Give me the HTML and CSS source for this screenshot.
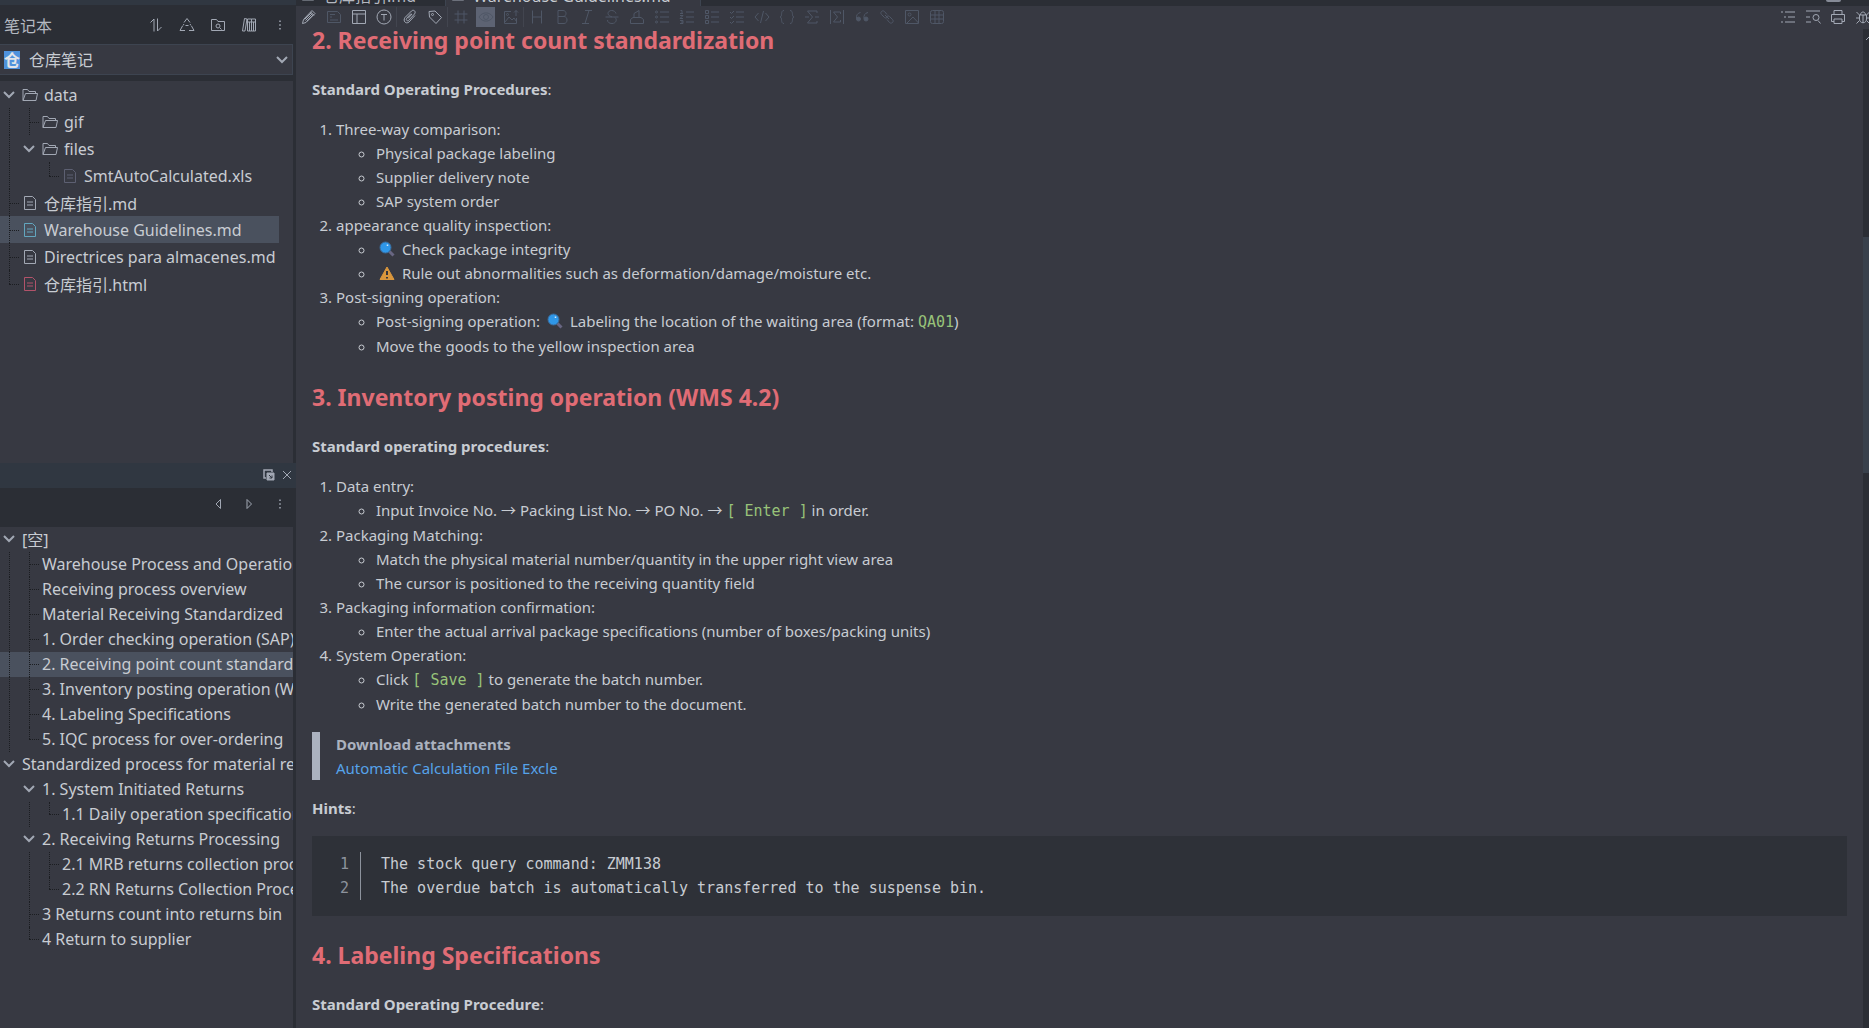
FILE: index.html
```
<!DOCTYPE html>
<html lang="zh-CN">
<head>
<meta charset="utf-8">
<title>Warehouse Guidelines.md</title>
<link rel="stylesheet" href="styles.css">
</head>
<body>
<svg class="sprite" aria-hidden="true">
  <symbol id="chev" viewBox="0 0 12 8"><path d="M1 1l5 5 5-5"/></symbol>
  <symbol id="folder" viewBox="0 0 16 16"><path d="M1 13.500V2.500h4.500l1.500 2h6.500v2M1 13.500l2.500-7h12l-1.500 7z"/></symbol>
  <symbol id="file" viewBox="0 0 16 16"><path d="M2.500 1.500h8l3 3v10h-11zM5 7h6M5 10h6"/></symbol>
  <symbol id="sort" viewBox="0 0 16 16"><path d="M2.500 5.500L6 2v12.500M9.500 1.500V14l4-4"/></symbol>
  <symbol id="recycle" viewBox="0 0 16 16"><path d="M5 5.500L8 1.500l3 4M3.500 9L1 13.500h5M12.500 9l2.500 4.500h-5M6.500 8.500h3M5 7l-1 1.500M11 7l1 1.500"/></symbol>
  <symbol id="foldersearch" viewBox="0 0 16 16"><path d="M1.500 13.500v-11h5l1.500 2h6.500v9zM10 11l1.500 1.500"/><circle cx="8" cy="9" r="2"/></symbol>
  <symbol id="books" viewBox="0 0 16 16"><path d="M3.500 1.500L1.500 14h2.500L6 2zM6.500 2h4v12h-4zM10.500 2h4v12h-4zM6.500 5h8M8.500 5v9M12.500 5v9"/></symbol>
  <symbol id="dots" viewBox="0 0 16 16"><path d="M7 3h2M7 8h2M7 13h2" stroke-width="2"/></symbol>
  <symbol id="float" viewBox="0 0 12 12"><path d="M3 9H1V1h8v2" stroke-width="1.500"/><path d="M4 4h7v7H4z" class="solid"/><path d="M6 6l3 3M9 6.500V9H6.500" stroke="#303741"/></symbol>
  <symbol id="close" viewBox="0 0 12 12"><path d="M2 2l8 8M10 2l-8 8"/></symbol>
  <symbol id="prev" viewBox="0 0 16 16"><path d="M10.500 3.500v9L6 8z"/></symbol>
  <symbol id="next" viewBox="0 0 16 16"><path d="M6 3.500v9L10.500 8z"/></symbol>
  <symbol id="pencil" viewBox="0 0 16 16"><path d="M1.500 14.500l1-4 8.500-9 3 3-9 9zM3.500 10.500l7-7M5.500 12.500l7-7M9.500 3l3.500 3.500M4.500 11.500l7-7"/></symbol>
  <symbol id="save" viewBox="0 0 16 16"><path d="M1.500 2.500h10l3 3v8h-13zM4 5.500h5M4 8h2M4 11h8"/></symbol>
  <symbol id="layout" viewBox="0 0 16 16"><path d="M1.500 1.500h13v13h-13zM1.500 5h13M6 5v9.500"/></symbol>
  <symbol id="tcircle" viewBox="0 0 16 16"><circle cx="8" cy="8" r="7"/><path d="M5 5.500h6M8 5.500v6"/></symbol>
  <symbol id="clip" viewBox="0 0 16 16"><path d="M9 4.500l-4.500 5c-1 1.500 1 3 2 2l6-6.500c2-2.500-1-5-3-3L3 8.500c-2.500 3.500 1 7 4 4.500l6-6.500M10 5l-4 4.500"/></symbol>
  <symbol id="tag" viewBox="0 0 16 16"><path d="M2 2.500l6-.500 6.500 6.500-5.500 6L2.500 8z"/><circle cx="5.500" cy="5.500" r="1"/></symbol>
  <symbol id="hash" viewBox="0 0 16 16"><path d="M5 1.500v13M11 1.500v13M1.500 5h13M1.500 11h13"/></symbol>
  <symbol id="eye" viewBox="0 0 16 16"><path d="M1 8c3.500-5.500 10.500-5.500 14 0-3.500 5.500-10.500 5.500-14 0z"/><circle cx="8" cy="8" r="2.500"/></symbol>
  <symbol id="imgup" viewBox="0 0 16 16"><path d="M8 2.500H1.500v12h12V9M2 13l4-5 3 3 2-2 2.500 3.500M13 7V1.500M11 3.500l2-2 2 2"/><circle cx="4.500" cy="5.500" r="1"/></symbol>
  <symbol id="h" viewBox="0 0 16 16"><path d="M3.500 1.500v13M12.500 1.500v13M3.500 8h9"/></symbol>
  <symbol id="b" viewBox="0 0 16 16"><path d="M4 1.500h5c4 0 4 6 0 6H4zM4 7.500h6c4 0 4 7 0 7H4z"/></symbol>
  <symbol id="i" viewBox="0 0 16 16"><path d="M6 1.500h7M3 14.500h7M10 1.500l-4 13"/></symbol>
  <symbol id="s" viewBox="0 0 16 16"><path d="M12 4.500c-1-4-8-4-8 0 0 2 2 2.500 4 3.500M1.500 8h13M11 8.500c2.500 2 1 6-3 6-3 0-4.500-1.500-4.500-3.500"/></symbol>
  <symbol id="marker" viewBox="0 0 16 16"><path d="M1.500 14.500v-4l2.500-2h8l2.500 2v4zM5 8.500V4.500l5-3v7"/></symbol>
  <symbol id="ul" viewBox="0 0 16 16"><path d="M6 3h9M6 8h9M6 13h9"/><circle cx="2.500" cy="3" r="1"/><circle cx="2.500" cy="8" r="1"/><circle cx="2.500" cy="13" r="1"/></symbol>
  <symbol id="ol" viewBox="0 0 16 16"><path d="M7 3h8M7 8h8M7 13h8M1.500 1.500h1.500v3M1 4.500h3M1 6.500h3l-3 3h3M1 11.500h3v3H1M2 13h2"/></symbol>
  <symbol id="sq" viewBox="0 0 16 16"><path d="M7 3h8M7 8h8M7 13h8M1.500 1.500h3v3h-3zM1.500 6.500h3v3h-3zM1.500 11.500h3v3h-3z"/></symbol>
  <symbol id="task" viewBox="0 0 16 16"><path d="M7 3h8M7 8h8M7 13h8M1 3l1.500 1.500L5 2M1 8l1.500 1.500L5 7M1 13l1.500 1.500L5 12"/></symbol>
  <symbol id="code" viewBox="0 0 16 16"><path d="M4.500 4L1 8l3.500 4M11.500 4L15 8l-3.500 4M9.500 2l-3 12"/></symbol>
  <symbol id="brace" viewBox="0 0 16 16"><path d="M5 1.500c-4 0-1 6-4 6.500 3 .500 0 6.500 4 6.500M11 1.500c4 0 1 6 4 6.500-3 .500 0 6.500-4 6.500"/></symbol>
  <symbol id="sum" viewBox="0 0 16 16"><path d="M13 4V2H3.500l5 6-5 6H13v-2M1 8h4M11 8h4"/></symbol>
  <symbol id="sumbox" viewBox="0 0 16 16"><path d="M1.500 1v14M14.500 1v14M11.500 5V3h-7l4 5-4 5h7v-2"/></symbol>
  <symbol id="quote" viewBox="0 0 16 16"><path d="M6.500 3.500c-3 .500-4.500 3-4 6M14 3.500c-3 .500-4.500 3-4 6"/><circle cx="4.500" cy="10" r="2" class="solid"/><circle cx="12" cy="10" r="2" class="solid"/></symbol>
  <symbol id="link" viewBox="0 0 16 16"><path d="M8 5.500L5.500 2.500C3.500.500.500 3.500 2.500 5.500l3 3c1 1 2.500.500 3-.500M8 10.500l2.500 3c2 2 5-1 3-3l-3-3c-1-1-2.500-.500-3 .500M6 6l4 4"/></symbol>
  <symbol id="img" viewBox="0 0 16 16"><path d="M1.500 1.500h13v13h-13zM3 14l6-6 5.500 6"/><circle cx="5.500" cy="5.500" r="1.500"/></symbol>
  <symbol id="table" viewBox="0 0 16 16"><rect x="1.500" y="1.500" width="13" height="13" rx="2"/><path d="M1.500 6h13M1.500 10h13M6 1.500v13M10 1.500v13"/></symbol>
  <symbol id="outline" viewBox="0 0 16 16"><path d="M1 3h2M5 3h10M4 8h2M8 8h7M1 13h2M5 13h10"/></symbol>
  <symbol id="find" viewBox="0 0 16 16"><path d="M1 2h14M1 8h4M1 13h5M13 11.500l2.500 3"/><circle cx="11" cy="8.500" r="3"/></symbol>
  <symbol id="print" viewBox="0 0 16 16"><path d="M4 5.500v-4h8v4M4 12.500H1.500v-7h13v7H12M4 10h8v4.500H4z"/></symbol>
  <symbol id="bug" viewBox="0 0 16 16"><path d="M4.500 6h7v4c0 5-7 5-7 0zM5.500 6c0-4 5-4 5 0M8 6v8M4.500 6L1.500 3M11.500 6l3-3M4.500 9H1M11.500 9H15M4.500 11.500l-3 3M11.500 11.500l3 3"/></symbol>
  <symbol id="lens" viewBox="0 0 16 16"><path d="M10.500 10.500l4 4" stroke="#686682" stroke-width="3"/><circle cx="6.500" cy="6.500" r="5.500" fill="#2f97e8" stroke="#3b6c9c"/><path d="M8.500 3.500v1.500" stroke="#d5e9fa" stroke-width="1.500"/></symbol>
  <symbol id="warn" viewBox="0 0 16 16"><path d="M8 2l7 12.500H1z" fill="#d9963c" stroke="#d9963c"/><path d="M8 6v4M8 12v1.500" stroke="#33353c" stroke-width="2"/></symbol>
</svg>
<div class="app">
  <aside class="side">
    <section class="dock files">
      <div class="strip"></div>
      <header class="head">
        <h1>笔记本</h1>
        <button aria-label="Sort"><svg class="ic"><use href="#sort"/></svg></button>
        <button aria-label="Recycle bin"><svg class="ic"><use href="#recycle"/></svg></button>
        <button aria-label="Search folder"><svg class="ic"><use href="#foldersearch"/></svg></button>
        <button aria-label="Notebooks"><svg class="ic"><use href="#books"/></svg></button>
        <button aria-label="More"><svg class="ic sm"><use href="#dots"/></svg></button>
      </header>
      <label class="picker"><span class="badge">仓</span>
        <select aria-label="笔记本"><option>仓库笔记</option></select>
        <svg class="chev"><use href="#chev"/></svg>
      </label>
      <ul class="tree">
        <li><i class="c"><svg class="chev"><use href="#chev"/></svg></i><svg class="ic"><use href="#folder"/></svg><span>data</span></li>
        <li><i class="v"></i><i class="t"></i><svg class="ic"><use href="#folder"/></svg><span>gif</span></li>
        <li><i class="v"></i><i class="c"><svg class="chev"><use href="#chev"/></svg></i><svg class="ic"><use href="#folder"/></svg><span>files</span></li>
        <li><i class="v"></i><i></i><i class="l"></i><svg class="ic dim"><use href="#file"/></svg><span>SmtAutoCalculated.xls</span></li>
        <li><i class="t"></i><svg class="ic"><use href="#file"/></svg><span>仓库指引.md</span></li>
        <li class="on"><i class="t"></i><svg class="ic blue"><use href="#file"/></svg><span>Warehouse Guidelines.md</span></li>
        <li><i class="t"></i><svg class="ic"><use href="#file"/></svg><span>Directrices para almacenes.md</span></li>
        <li><i class="l"></i><svg class="ic red"><use href="#file"/></svg><span>仓库指引.html</span></li>
      </ul>
    </section>
    <section class="dock outline">
      <div class="title">
        <button aria-label="Float"><svg class="ic sm"><use href="#float"/></svg></button>
        <button aria-label="Close"><svg class="ic sm"><use href="#close"/></svg></button>
      </div>
      <header class="head">
        <button aria-label="Previous"><svg class="ic"><use href="#prev"/></svg></button>
        <button aria-label="Next"><svg class="ic"><use href="#next"/></svg></button>
        <button aria-label="More"><svg class="ic sm"><use href="#dots"/></svg></button>
      </header>
      <ul class="tree">
        <li><i class="c"><svg class="chev"><use href="#chev"/></svg></i><span>[空]</span></li>
        <li><i class="v"></i><i class="t"></i><span>Warehouse Process and Operation</span></li>
        <li><i class="v"></i><i class="t"></i><span>Receiving process overview</span></li>
        <li><i class="v"></i><i class="t"></i><span>Material Receiving Standardized</span></li>
        <li><i class="v"></i><i class="t"></i><span>1. Order checking operation (SAP)</span></li>
        <li class="on"><i class="v"></i><i class="t"></i><span>2. Receiving point count standardization</span></li>
        <li><i class="v"></i><i class="t"></i><span>3. Inventory posting operation (WMS 4.2)</span></li>
        <li><i class="v"></i><i class="t"></i><span>4. Labeling Specifications</span></li>
        <li><i class="v"></i><i class="l"></i><span>5. IQC process for over-ordering</span></li>
        <li><i class="c"><svg class="chev"><use href="#chev"/></svg></i><span>Standardized process for material returns</span></li>
        <li><i></i><i class="c"><svg class="chev"><use href="#chev"/></svg></i><span>1. System Initiated Returns</span></li>
        <li><i></i><i class="v"></i><i class="l"></i><span>1.1 Daily operation specification</span></li>
        <li><i></i><i class="c"><svg class="chev"><use href="#chev"/></svg></i><span>2. Receiving Returns Processing</span></li>
        <li><i></i><i class="v"></i><i class="t"></i><span>2.1 MRB returns collection process</span></li>
        <li><i></i><i class="v"></i><i class="l"></i><span>2.2 RN Returns Collection Process</span></li>
        <li><i></i><i class="t"></i><span>3 Returns count into returns bin</span></li>
        <li><i></i><i class="l"></i><span>4 Return to supplier</span></li>
      </ul>
    </section>
  </aside>
  <main class="main">
    <nav class="tabs">
      <a href="#"><svg class="ic"><use href="#file"/></svg>仓库指引.md</a>
      <a href="#" class="on"><svg class="ic"><use href="#file"/></svg>Warehouse Guidelines.md</a>
      <button class="menu" aria-label="Tab list"></button>
    </nav>
    <div class="tools">
      <button aria-label="Edit"><svg class="ic"><use href="#pencil"/></svg></button>
      <button aria-label="Save" disabled><svg class="ic"><use href="#save"/></svg></button>
      <button aria-label="Layout"><svg class="ic"><use href="#layout"/></svg></button>
      <button aria-label="Typewriter"><svg class="ic"><use href="#tcircle"/></svg></button>
      <hr>
      <button aria-label="Attachments"><svg class="ic"><use href="#clip"/></svg></button>
      <button aria-label="Tags"><svg class="ic"><use href="#tag"/></svg></button>
      <hr>
      <button aria-label="Section numbers" disabled><svg class="ic"><use href="#hash"/></svg></button>
      <button aria-label="Preview" class="pressed" disabled><svg class="ic"><use href="#eye"/></svg></button>
      <button aria-label="Upload image" disabled><svg class="ic"><use href="#imgup"/></svg></button>
      <hr>
      <button aria-label="Heading" disabled><svg class="ic"><use href="#h"/></svg></button>
      <button aria-label="Bold" disabled><svg class="ic"><use href="#b"/></svg></button>
      <button aria-label="Italic" disabled><svg class="ic"><use href="#i"/></svg></button>
      <button aria-label="Strikethrough" disabled><svg class="ic"><use href="#s"/></svg></button>
      <button aria-label="Highlight" disabled><svg class="ic"><use href="#marker"/></svg></button>
      <button aria-label="Bulleted list" disabled><svg class="ic"><use href="#ul"/></svg></button>
      <button aria-label="Numbered list" disabled><svg class="ic"><use href="#ol"/></svg></button>
      <button aria-label="Check list" disabled><svg class="ic"><use href="#sq"/></svg></button>
      <button aria-label="Done list" disabled><svg class="ic"><use href="#task"/></svg></button>
      <button aria-label="Code" disabled><svg class="ic"><use href="#code"/></svg></button>
      <button aria-label="Code block" disabled><svg class="ic"><use href="#brace"/></svg></button>
      <button aria-label="Formula" disabled><svg class="ic"><use href="#sum"/></svg></button>
      <button aria-label="Formula block" disabled><svg class="ic"><use href="#sumbox"/></svg></button>
      <button aria-label="Quote" disabled><svg class="ic"><use href="#quote"/></svg></button>
      <button aria-label="Link" disabled><svg class="ic"><use href="#link"/></svg></button>
      <button aria-label="Image" disabled><svg class="ic"><use href="#img"/></svg></button>
      <button aria-label="Table" disabled><svg class="ic"><use href="#table"/></svg></button>
      <div class="fill"></div>
      <button aria-label="Outline"><svg class="ic"><use href="#outline"/></svg></button>
      <button aria-label="Find"><svg class="ic"><use href="#find"/></svg></button>
      <button aria-label="Print"><svg class="ic"><use href="#print"/></svg></button>
      <button aria-label="Debug"><svg class="ic"><use href="#bug"/></svg></button>
    </div>
    <div class="view">
      <article class="doc">
        <h2>2. Receiving point count standardization</h2>
        <p><b>Standard Operating Procedures</b>:</p>
        <ol>
          <li>Three-way comparison:
            <ul>
              <li>Physical package labeling</li>
              <li>Supplier delivery note</li>
              <li>SAP system order</li>
            </ul>
          </li>
          <li>appearance quality inspection:
            <ul>
              <li><svg class="emoji"><use href="#lens"/></svg> Check package integrity</li>
              <li><svg class="emoji"><use href="#warn"/></svg> Rule out abnormalities such as deformation/damage/moisture etc.</li>
            </ul>
          </li>
          <li>Post-signing operation:
            <ul>
              <li class="coded">Post-signing operation: <svg class="emoji"><use href="#lens"/></svg> Labeling the location of the waiting area (format: <code>QA01</code>)</li>
              <li>Move the goods to the yellow inspection area</li>
            </ul>
          </li>
        </ol>
        <h2>3. Inventory posting operation (WMS 4.2)</h2>
        <p><b>Standard operating procedures</b>:</p>
        <ol>
          <li>Data entry:
            <ul>
              <li class="coded">Input Invoice No. → Packing List No. → PO No. → <code>[ Enter ]</code> in order.</li>
            </ul>
          </li>
          <li>Packaging Matching:
            <ul>
              <li>Match the physical material number/quantity in the upper right view area</li>
              <li>The cursor is positioned to the receiving quantity field</li>
            </ul>
          </li>
          <li>Packaging information confirmation:
            <ul>
              <li>Enter the actual arrival package specifications (number of boxes/packing units)</li>
            </ul>
          </li>
          <li>System Operation:
            <ul>
              <li class="coded">Click <code>[ Save ]</code> to generate the batch number.</li>
              <li>Write the generated batch number to the document.</li>
            </ul>
          </li>
        </ol>
        <blockquote><b>Download attachments</b><br><a href="#">Automatic Calculation File Excle</a></blockquote>
        <p><b>Hints</b>:</p>
        <div class="block">
          <div class="nums">1<br>2</div>
          <pre>The stock query command: ZMM138
The overdue batch is automatically transferred to the suspense bin.</pre>
        </div>
        <h2>4. Labeling Specifications</h2>
        <p><b>Standard Operating Procedure</b>:</p>
      </article>
      <div class="bar"><svg class="up"><use href="#chev"/></svg><div class="thumb"></div></div>
    </div>
  </main>
</div>
</body>
</html>
```
FILE: styles.css
```
:root {
  --bg: #373942;
  --dark: #2b2e35;
  --title: #303741;
  --sel: #4a515e;
  --text: #c8ccd2;
  --icon: #a2a8b4;
  --off: #4f5766;
}

* { box-sizing: border-box; }

body {
  margin: 0;
  background: var(--bg);
  color: var(--text);
  font-family: "Noto Sans", "Noto Sans CJK SC", sans-serif;
}

button {
  display: flex;
  align-items: center;
  justify-content: center;
  padding: 0;
  border: 0;
  background: none;
  color: inherit;
}

.sprite { position: absolute; width: 0; height: 0; }

svg { fill: none; stroke: currentColor; flex: none; }
.solid { fill: currentColor; }
.ic { width: 16px; height: 16px; color: var(--icon); }
.ic.sm { width: 12px; height: 12px; }
.ic.dim { color: #5d6072; }
.ic.blue { color: #62a6bf; }
.ic.red { color: #b2536a; }
.chev { width: 12px; height: 8px; color: var(--icon); stroke-width: 2; }

.app { display: flex; height: 100vh; overflow: hidden; }

/* Side panels */
.side {
  display: flex;
  flex-direction: column;
  flex: none;
  width: 296px;
  background: var(--dark);
  font-size: 16px;
}

.dock { display: flex; flex-direction: column; min-height: 0; }
.files { flex: 9; }
.outline { flex: 11; }
.strip { flex: none; height: 5px; background: var(--title); }

.head {
  display: flex;
  align-items: center;
  justify-content: flex-end;
  gap: 7px;
  flex: none;
  height: 39px;
  padding: 0 4px;
}
.outline .head { padding-bottom: 6px; }
.head h1 { flex: 1; margin: 0; font-size: 16px; font-weight: 400; color: #b4b8c0; }
.head button { width: 24px; height: 24px; }

.picker {
  display: flex;
  align-items: center;
  flex: none;
  height: 31px;
  margin: 0 3px 6px 0;
  padding: 0 4px;
  border: 1px solid #3d4450;
  border-left: 0;
  background: var(--bg);
}
.badge {
  width: 16px;
  height: 18px;
  background: #4f92dc;
  color: #e2e4e8;
  font-size: 16px;
  font-weight: 700;
  line-height: 18px;
  text-align: center;
}
.picker select {
  flex: 1;
  appearance: none;
  margin: 0;
  padding: 0 9px;
  border: 0;
  background: none;
  color: var(--text);
  font: inherit;
}

.tree {
  flex: 1;
  min-height: 0;
  margin: 0 3px 0 0;
  padding: 0;
  overflow: hidden;
  background: var(--bg);
  list-style: none;
  white-space: nowrap;
}
.tree li { display: flex; align-items: center; height: 25px; }
.tree li.on { background: var(--sel); }
.files .tree li { height: 27px; margin-right: 14px; }
.tree .ic { margin: 0 4px 0 2px; }
.tree span { padding-left: 2px; }

/* Tree guides: one 20px cell per level */
.tree i { position: relative; flex: none; width: 20px; height: 100%; }
.tree i.c { display: flex; align-items: center; padding-left: 3px; }
.tree i::before, .tree i::after { position: absolute; left: 9px; top: 0; border: 0 dotted #1b1d21; }
.tree i.v::before, .tree i.t::before { content: ""; height: 100%; border-left-width: 1px; }
.tree i.l::before { content: ""; height: 50%; border-left-width: 1px; }
.tree i.t::after, .tree i.l::after { content: ""; top: 50%; width: 10px; border-top-width: 1px; }

.title {
  display: flex;
  align-items: center;
  justify-content: flex-end;
  gap: 6px;
  flex: none;
  height: 25px;
  padding-right: 3px;
  background: var(--title);
}

/* Editor */
.main { display: flex; flex-direction: column; flex: 1; min-width: 0; }

.tabs { display: flex; align-items: flex-end; flex: none; height: 6px; overflow: hidden; background: var(--dark); }
.tabs a {
  display: flex;
  align-items: center;
  height: 20px;
  padding: 0 29px 0 4px;
  border-right: 1px solid #3d4450;
  background: var(--dark);
  color: #b4b8c0;
  font-size: 16px;
  line-height: 16px;
  text-decoration: none;
}
.tabs a.on { background: var(--bg); color: var(--text); }
.tabs .ic { margin: 0 7px 4px 0; opacity: 0.5; }
.menu { width: 15px; height: 2px; margin: 0 28px 4px auto; border-radius: 0 0 2px 2px; background: #868b97; }

.tools { display: flex; align-items: center; flex: none; height: 22px; margin-right: -6px; }
.tools button { flex: none; width: 25px; height: 20px; }
.tools button:disabled .ic { color: var(--off); }
.tools button.pressed { width: 19px; margin: 0 3px; background: #5d6373; }
.tools hr { width: 1px; height: 20px; margin: 0; border: 0; background: #42454f; }
.fill { flex: 1; }

.view { display: flex; flex: 1; min-height: 0; }

.doc {
  flex: 1;
  min-width: 0;
  padding: 0 16px;
  overflow: hidden;
  font-size: 15px;
  line-height: 24px;
}
.doc h2 {
  margin: 24px 0 22px;
  color: #e06c75;
  font-size: 23px;
  line-height: 30px;
}
.doc h2:first-child { margin-top: -3px; }
.doc p, .doc ol, .doc blockquote { margin: 0 0 16px; }
.doc ol { padding-left: 24px; }
.doc ul { margin: 0; padding-left: 40px; list-style: circle; }
.doc .coded { line-height: 25px; }
.doc code, .block { font-family: "DejaVu Sans Mono", monospace; font-size: 15px; }
.doc code { color: #98c379; line-height: 20px; }
.emoji { width: 16px; height: 16px; margin: 0 3px; vertical-align: -2px; }

.doc blockquote { padding-left: 16px; border-left: 8px solid #abb2bf; color: #abb2bf; }
.doc a { color: #56a3ea; text-decoration: none; }

.block { display: flex; padding: 16px 20px; background: #2e3138; }
.nums { width: 29px; padding-left: 8px; border-right: 1px solid #8d939d; color: #8d939d; }
.block pre { margin: 0; padding-left: 20px; font: inherit; }

.bar { flex: none; width: 6px; margin-top: 1px; overflow: hidden; background: var(--dark); }
.up { display: block; width: 12px; height: 8px; margin: 4px 0 0 2px; transform: rotate(180deg); color: var(--icon); }
.thumb { height: 236px; margin-top: 196px; background: #39414c; }
```
